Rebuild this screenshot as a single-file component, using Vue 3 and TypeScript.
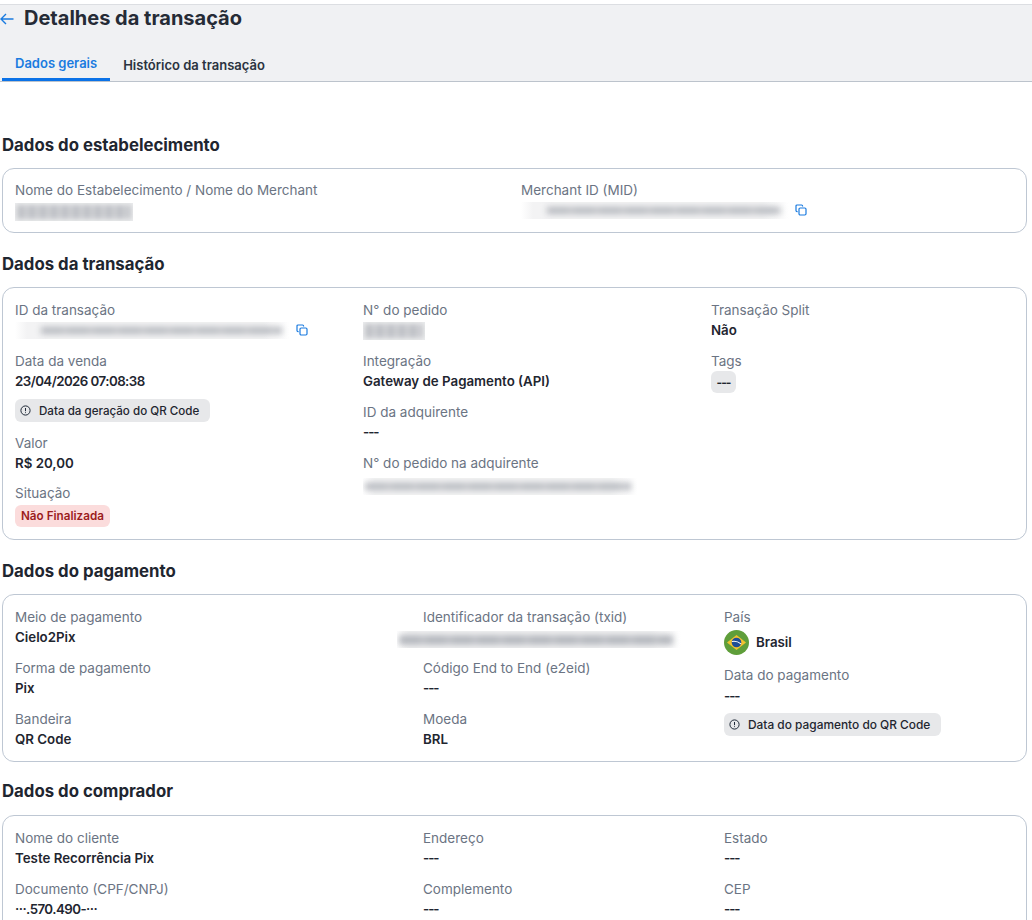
<template>
  <div class="page">
    <header class="page-header">
      <div class="title-row">
        <svg class="back-icon" width="14" height="12" viewBox="0 0 14 12" fill="none">
          <path d="M13.5 6H1M6 1 1 6l5 5" stroke="#1a7be0" stroke-width="1.4" />
        </svg>
        <h1 class="page-title">Detalhes da transação</h1>
      </div>
      <nav class="tabs">
        <a class="tab tab-active">Dados gerais</a>
        <a class="tab">Histórico da transação</a>
      </nav>
    </header>

    <main class="content">
      <h2 class="section-title first">Dados do estabelecimento</h2>
      <section class="card grid-merchant">
        <div class="field">
          <span class="label">Nome do Estabelecimento / Nome do Merchant</span>
          <div class="redacted short"><i></i></div>
        </div>
        <div class="field">
          <span class="label">Merchant ID (MID)</span>
          <div class="copy-row">
            <div class="redacted mid merchant"><i></i></div>
            <svg class="copy-icon" width="12" height="12" viewBox="0 0 12 12" fill="none">
              <path d="M2.6 7.6H2A1 1 0 0 1 1 6.600V2a1 1 0 0 1 1-1h4.600a1 1 0 0 1 1 1v.6" stroke="#1a7be0" stroke-width="1.200" />
              <rect x="4" y="4" width="7" height="7" rx="1.200" stroke="#1a7be0" stroke-width="1.200" />
            </svg>
          </div>
        </div>
      </section>

      <h2 class="section-title">Dados da transação</h2>
      <section class="card grid-transaction">
        <div class="column">
          <div class="field">
            <span class="label">ID da transação</span>
            <div class="copy-row">
              <div class="redacted mid"><i></i></div>
              <svg class="copy-icon" width="12" height="12" viewBox="0 0 12 12" fill="none">
                <path d="M2.6 7.6H2A1 1 0 0 1 1 6.600V2a1 1 0 0 1 1-1h4.600a1 1 0 0 1 1 1v.6" stroke="#1a7be0" stroke-width="1.200" />
                <rect x="4" y="4" width="7" height="7" rx="1.200" stroke="#1a7be0" stroke-width="1.200" />
              </svg>
            </div>
          </div>
          <div class="field">
            <span class="label">Data da venda</span>
            <span class="value date">23/04/2026 07:08:38</span>
            <span class="chip">
              <svg width="11" height="11" viewBox="0 0 11 11" fill="none">
                <circle cx="5.500" cy="5.500" r="4.600" stroke="#1f2937" stroke-width="1" />
                <path d="M5.500 3v3.200M5.500 7.300v.8" stroke="#1f2937" stroke-width="1" />
              </svg>
              Data da geração do QR Code
            </span>
          </div>
          <div class="field">
            <span class="label">Valor</span>
            <span class="value tight">R$ 20,00</span>
          </div>
          <div class="field">
            <span class="label">Situação</span>
            <span class="badge-danger">Não Finalizada</span>
          </div>
        </div>
        <div class="column">
          <div class="field">
            <span class="label">N° do pedido</span>
            <div class="redacted order"><i></i></div>
          </div>
          <div class="field">
            <span class="label">Integração</span>
            <span class="value">Gateway de Pagamento (API)</span>
          </div>
          <div class="field">
            <span class="label">ID da adquirente</span>
            <span class="value dash">---</span>
          </div>
          <div class="field">
            <span class="label">N° do pedido na adquirente</span>
            <div class="redacted long"><i></i></div>
          </div>
        </div>
        <div class="column">
          <div class="field">
            <span class="label">Transação Split</span>
            <span class="value">Não</span>
          </div>
          <div class="field">
            <span class="label">Tags</span>
            <span class="tag">---</span>
          </div>
        </div>
      </section>

      <h2 class="section-title">Dados do pagamento</h2>
      <section class="card grid-wide payment">
        <div class="column">
          <div class="field">
            <span class="label">Meio de pagamento</span>
            <span class="value">Cielo2Pix</span>
          </div>
          <div class="field">
            <span class="label">Forma de pagamento</span>
            <span class="value">Pix</span>
          </div>
          <div class="field">
            <span class="label">Bandeira</span>
            <span class="value">QR Code</span>
          </div>
        </div>
        <div class="column">
          <div class="field">
            <span class="label">Identificador da transação (txid)</span>
            <div class="redacted txid"><i></i></div>
          </div>
          <div class="field">
            <span class="label">Código End to End (e2eid)</span>
            <span class="value dash">---</span>
          </div>
          <div class="field">
            <span class="label">Moeda</span>
            <span class="value">BRL</span>
          </div>
        </div>
        <div class="column">
          <div class="field">
            <span class="label">País</span>
            <div class="country">
              <svg width="25" height="25" viewBox="0 0 25 25">
                <circle cx="12.500" cy="12.500" r="12.500" fill="#5f9e3a" />
                <path d="M12.500 5 22 12.500 12.500 20 3 12.500z" fill="#f2c230" />
                <circle cx="12.500" cy="12.500" r="4.800" fill="#1f4e96" />
                <path d="M8 11.500c3-.6 6.200.2 9 2.400" stroke="#fff" stroke-width="1.100" fill="none" />
              </svg>
              <span class="value">Brasil</span>
            </div>
          </div>
          <div class="field">
            <span class="label">Data do pagamento</span>
            <span class="value dash spaced">---</span>
            <span class="chip wide">
              <svg width="11" height="11" viewBox="0 0 11 11" fill="none">
                <circle cx="5.500" cy="5.500" r="4.600" stroke="#1f2937" stroke-width="1" />
                <path d="M5.500 3v3.200M5.500 7.300v.8" stroke="#1f2937" stroke-width="1" />
              </svg>
              Data do pagamento do QR Code
            </span>
          </div>
        </div>
      </section>

      <h2 class="section-title buyer">Dados do comprador</h2>
      <section class="card grid-wide last">
        <div class="column">
          <div class="field">
            <span class="label">Nome do cliente</span>
            <span class="value">Teste Recorrência Pix</span>
          </div>
          <div class="field">
            <span class="label">Documento (CPF/CNPJ)</span>
            <span class="value date">···.570.490-···</span>
          </div>
        </div>
        <div class="column">
          <div class="field">
            <span class="label">Endereço</span>
            <span class="value dash">---</span>
          </div>
          <div class="field">
            <span class="label">Complemento</span>
            <span class="value dash">---</span>
          </div>
        </div>
        <div class="column">
          <div class="field">
            <span class="label">Estado</span>
            <span class="value dash">---</span>
          </div>
          <div class="field">
            <span class="label">CEP</span>
            <span class="value dash">---</span>
          </div>
        </div>
      </section>
    </main>
  </div>
</template>

<script setup lang="ts">
</script>

<style>
html,
body {
  overflow: hidden;
  background: #fff;
}
</style>

<style scoped>
.page {
  width: 1032px;
  height: 920px;
  overflow: hidden;
  font-family: Inter, "Liberation Sans", sans-serif;
  color: #1f2937;
}

.page-header {
  margin-top: 4px;
  height: 78px;
  box-sizing: border-box;
  background: #f0f1f3;
  border-top: 1px solid #dcdee2;
  border-bottom: 1px solid #bcc3cc;
  display: flex;
  flex-direction: column;
}

.title-row {
  display: flex;
  align-items: center;
  gap: 10px;
  height: 27px;
}

.back-icon {
  flex: none;
}

.page-title {
  margin: 0 0 1px;
  font-size: 20px;
  font-weight: 700;
  color: #252b36;
}

.tabs {
  display: flex;
  margin-top: auto;
  padding-left: 2px;
}

.tab {
  height: 42px;
  box-sizing: border-box;
  padding: 16px 13px 0;
  font-size: 13px;
  font-weight: 600;
  line-height: 20px;
  color: #2b3340;
}

.tab-active {
  padding-top: 14px;
  color: #1a7be0;
  border-bottom: 3px solid #0b72e7;
}

.content {
  padding: 0 5px 0 2px;
}

.section-title {
  margin: 20px 0 12px;
  font-size: 16.800px;
  font-weight: 700;
  line-height: 22px;
  color: #1f2630;
}

.section-title.first {
  margin-top: 52px;
}

.section-title.buyer {
  margin: 18px 0 13px;
}

.card {
  border: 1px solid #bec7d3;
  border-radius: 12px;
  padding: 11px 12px;
  display: grid;
}

.card.grid-transaction {
  padding: 12px 12px;
}

.card.payment {
  padding: 12px 12px 11px;
}

.card.last {
  padding-top: 12px;
  padding-bottom: 60px;
}

.grid-merchant {
  grid-template-columns: 506px 1fr;
}

.grid-transaction {
  grid-template-columns: 348px 348px 1fr;
}

.grid-wide {
  grid-template-columns: 408px 301px 1fr;
}

.column {
  display: flex;
  flex-direction: column;
  gap: 10px;
  align-items: flex-start;
}

.field {
  display: flex;
  flex-direction: column;
  align-items: flex-start;
}

.label {
  font-size: 13.500px;
  line-height: 20px;
  color: #6b7483;
}

.value {
  font-size: 13.300px;
  font-weight: 600;
  line-height: 21px;
  color: #1f2630;
}

.value.date {
  letter-spacing: -0.55px;
}

.value.tight {
  line-height: 20px;
}

.value.dash {
  letter-spacing: -1px;
}

.value.spaced {
  margin-top: 1px;
}

.copy-row {
  display: flex;
  align-items: center;
  gap: 6px;
  height: 21px;
}

.copy-icon {
  flex: none;
  margin-bottom: 1px;
}

.redacted {
  height: 17px;
  background: linear-gradient(90deg, #fff, #f3f3f4 12px, #f3f3f4 90%, #fff);
  overflow: hidden;
  display: flex;
  align-items: center;
}

.redacted i {
  display: block;
  height: 7px;
  margin: 0 8px 0 26px;
  flex: 1;
  background: repeating-linear-gradient(90deg, #b5b8be 0 22px, #c3c5ca 22px 26px);
  filter: blur(3px);
}

.redacted.short {
  width: 118px;
  height: 18px;
  margin-top: 3px;
  background: #ecedee;
}

.redacted.short i,
.redacted.order i {
  height: 14px;
  margin: 0 2px;
  background: repeating-linear-gradient(90deg, #c0c2c7 0 8px, #d4d5d9 8px 11px);
  filter: blur(2.500px);
}

.redacted.mid {
  width: 275px;
}

.redacted.merchant {
  width: 268px;
}

.redacted.order {
  width: 62px;
  height: 18px;
  margin: 2px 0 1px;
  background: #ecedee;
}

.redacted.long {
  width: 274px;
  margin-top: 5px;
}

.redacted.long i {
  margin-left: 2px;
  margin-right: 6px;
}

.redacted.txid {
  width: 284px;
  margin: 4px 0 0 -26px;
}

.redacted.txid i {
  margin-left: 2px;
  height: 10px;
}

.chip {
  margin: 7px 0 1px;
  height: 23px;
  display: inline-flex;
  align-items: center;
  gap: 8px;
  padding: 0 11px 0 5px;
  border-radius: 6px;
  background: #e7e8ea;
  font-size: 11.600px;
  font-weight: 500;
  color: #1f2630;
}

.chip.wide {
  margin-top: 6px;
  font-size: 11.900px;
}

.badge-danger {
  margin-top: 2px;
  height: 22px;
  display: inline-flex;
  align-items: center;
  padding: 0 6px;
  border-radius: 6px;
  background: #fbdcdc;
  font-size: 11.700px;
  font-weight: 600;
  color: #9b1c1c;
}

.tag {
  height: 22px;
  width: 25px;
  display: inline-flex;
  align-items: center;
  justify-content: center;
  border-radius: 6px;
  background: #e7e8ea;
  font-size: 12px;
  font-weight: 700;
  letter-spacing: -1px;
  color: #1f2630;
}

.country {
  display: flex;
  align-items: center;
  gap: 7px;
  height: 26px;
  margin-top: 2px;
}
</style>
